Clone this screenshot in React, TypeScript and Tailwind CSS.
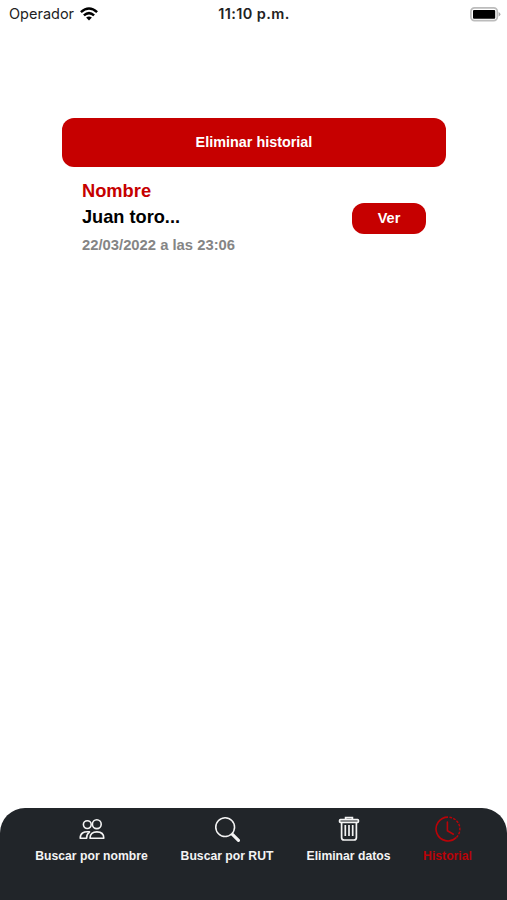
import React from 'react';
import { BsSearch } from 'react-icons/bs';

function Wifi() {
  return (
    <svg width="18" height="14" viewBox="0 0 18 14" fill="none" stroke="#000" strokeWidth="2.5" className="ml-[5px]">
      <path d="M.9 5.2Q9-2.2 17.1 5.2M3.9 8.4Q9 3.8 14.1 8.4" />
      <path d="M9 13.6 6.1 10.6Q9 8.3 11.9 10.6Z" fill="#000" stroke="none" />
    </svg>
  );
}

function Battery() {
  return (
    <svg width="31" height="15" viewBox="0 0 31 15">
      <rect x=".9" y=".9" width="26.4" height="12.8" rx="3.6" fill="#fff" stroke="#bcbcbc" strokeWidth="1.7" />
      <rect x="3" y="3" width="22.2" height="8.8" rx="1" fill="#000" />
      <path d="M28.6 5v4.6Q30.4 8.8 30.4 7.3T28.6 5Z" fill="#a9a9a9" />
    </svg>
  );
}

function People() {
  return (
    <svg width="26" height="26" viewBox="0 0 26 26" fill="none" stroke="currentColor" strokeWidth="1.6">
      <circle cx="8.3" cy="8.6" r="3.9" />
      <circle cx="17.8" cy="8.2" r="4.4" />
      <path d="M11 22.2c0-4.2 2.7-6.3 6.9-6.3s6.9 2.1 6.9 6.3Z" strokeLinejoin="round" />
      <path d="M10.6 15.9C4.3 15.2 1.2 17.4 1.2 22.2h6.4c-.1-2.5.8-4.6 3-6.3Z" strokeLinejoin="round" />
    </svg>
  );
}

function Trash() {
  return (
    <svg width="22" height="26" viewBox="0 0 22 26" fill="none" stroke="currentColor" strokeWidth="1.7">
      <rect x="1.6" y="3.6" width="18.8" height="2.8" rx=".8" />
      <path d="M7.6 3V1.7h6.8V3M3.6 6.6V21.5Q3.6 24 6.1 24h9.8q2.5 0 2.5-2.5V6.6M7.3 9v11M11 9v11M14.7 9v11" />
    </svg>
  );
}

function Clock() {
  return (
    <svg width="26" height="26" viewBox="0 0 26 26" fill="none" stroke="currentColor" strokeWidth="1.6">
      <path d="M13 1.1A11.9 11.9 0 1 0 21.2 21.6" />
      <path d="M14.5 1.2A11.9 11.9 0 0 1 21.2 21.6" strokeWidth="1.4" strokeDasharray="2.7 1.2" />
      <path d="M12.4 6v8.7l6 3.5" strokeLinecap="round" />
    </svg>
  );
}

function Tab({ icon, label, className }: { icon: React.ReactNode; label: string; className: string }) {
  return (
    <div className={`flex shrink-0 flex-col items-center whitespace-nowrap ${className}`}>
      <div className="flex h-[26px] items-center">{icon}</div>
      <span className="mt-[6px] text-[12.2px] leading-4 font-bold">{label}</span>
    </div>
  );
}

export default function App() {
  return (
    <div className="flex h-[900px] w-[507px] flex-col overflow-hidden bg-white font-['Liberation_Sans',Arial,sans-serif]">
      <header className="grid h-[28px] grid-cols-3 items-center pr-[6px] pl-[9px] font-['Inter',sans-serif] text-[14.5px] text-[#222]">
        <div className="flex items-center"><span className="w-[66px] whitespace-nowrap">Operador</span><Wifi /></div>
        <div className="-ml-[2px] text-center font-semibold tracking-[0.4px]">11:10 p.m.</div>
        <div className="flex justify-end"><Battery /></div>
      </header>
      <main className="flex-1 px-[62px] pt-[90px]">
        <button className="block h-[49px] w-[384px] rounded-[12px] bg-[#c60000] pt-px text-[14.4px] font-bold text-white">Eliminar historial</button>
        <section className="flex items-center justify-between pt-[10px] pr-[19px] pl-[20px]">
          <div className="font-bold whitespace-nowrap">
            <h2 className="text-[18.3px] leading-[27px] text-[#c60000]">Nombre</h2>
            <p className="text-[18.2px] leading-[27px] text-black">Juan toro...</p>
            <p className="pt-[1px] text-[14.8px] leading-[27px] text-[#858585]">22/03/2022 a las 23:06</p>
          </div>
          <button className="mt-px h-[31px] w-[74px] rounded-[12px] bg-[#c60000] pt-px text-[14.5px] font-bold text-white">Ver</button>
        </section>
      </main>
      <nav className="flex h-[92px] rounded-t-[25px] bg-[#212529] pt-[8px] pl-[35px] text-[#f4f4f4]">
        <Tab icon={<People />} label="Buscar por nombre" className="w-[113px]" />
        <Tab icon={<BsSearch size={25} />} label="Buscar por RUT" className="ml-[32px] w-[94px]" />
        <Tab icon={<Trash />} label="Eliminar datos" className="ml-[32px] w-[85px]" />
        <Tab icon={<Clock />} label="Historial" className="ml-[32px] w-[49px] text-[#b90308]" />
      </nav>
    </div>
  );
}
